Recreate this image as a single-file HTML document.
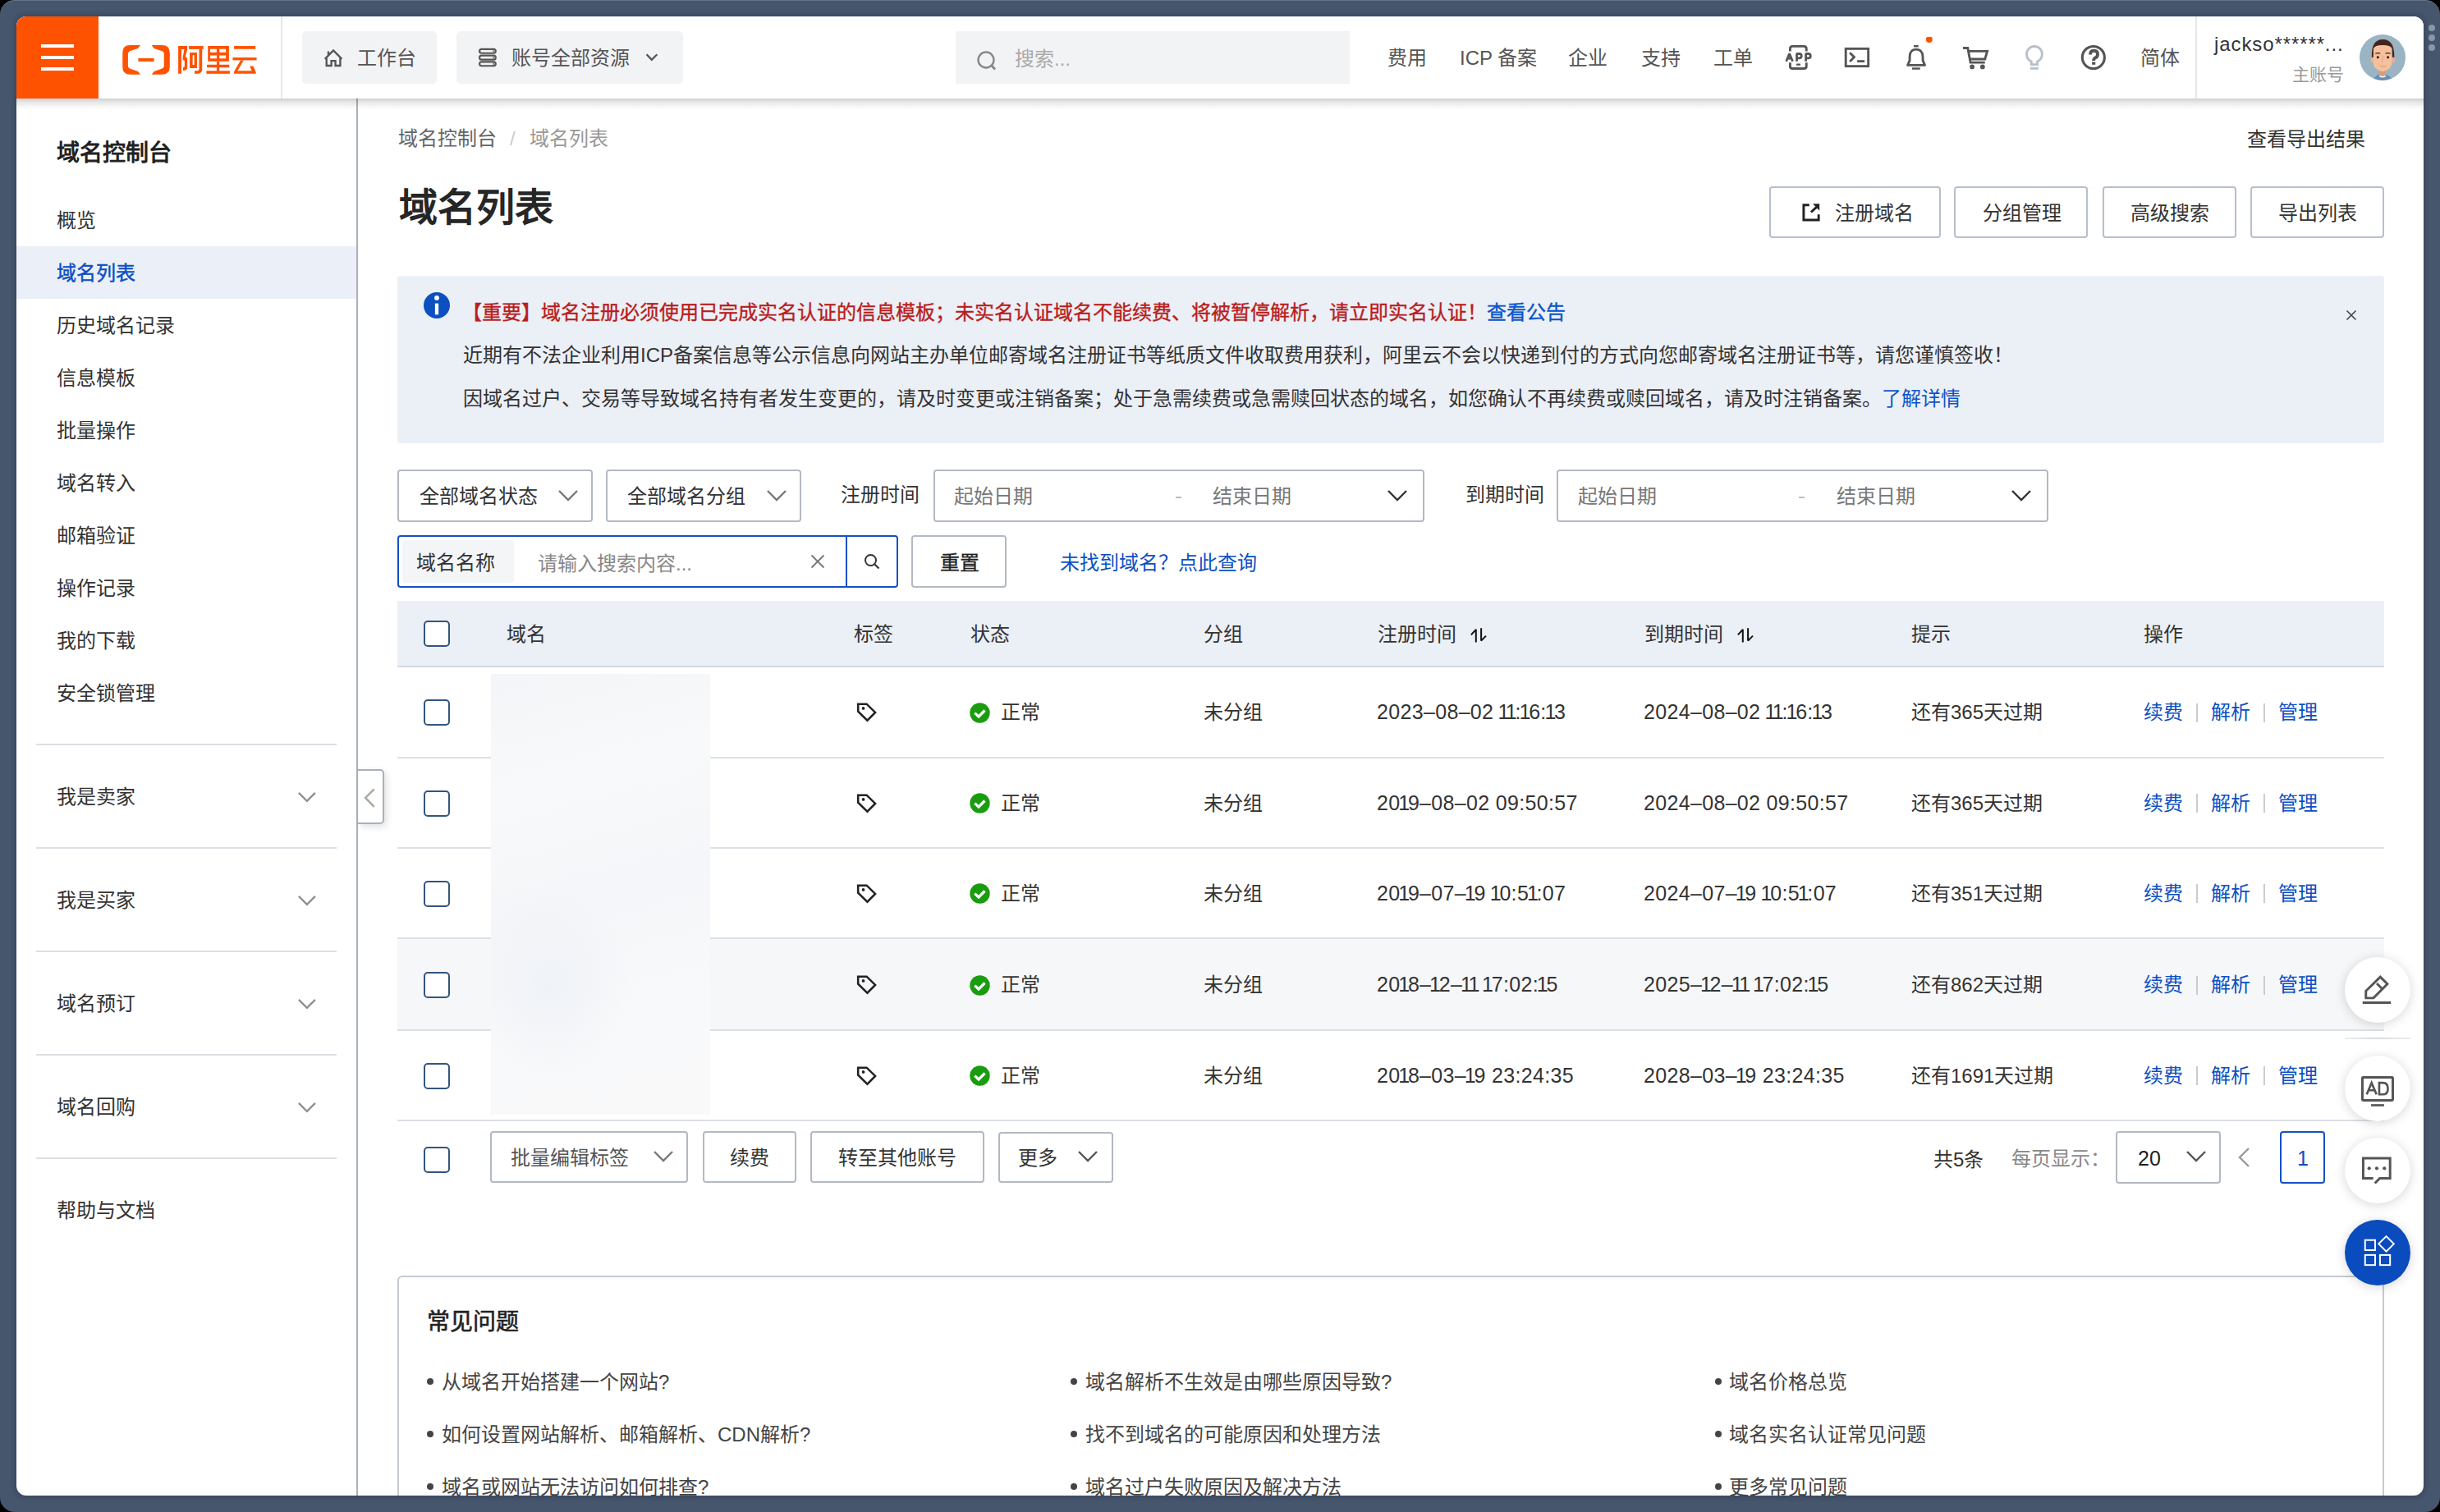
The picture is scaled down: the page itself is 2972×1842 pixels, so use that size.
<!DOCTYPE html>
<html lang="zh-CN"><head><meta charset="utf-8"><title>域名列表</title>
<style>
html,body{margin:0;padding:0;width:2972px;height:1842px;overflow:hidden;background:#000}
body{font-family:"Liberation Sans",sans-serif;position:relative}
.frame{position:absolute;left:0;top:0;width:2972px;height:1842px;background:#46566d;border-radius:18px;box-shadow:inset 0 1px 0 rgba(255,255,255,0.18)}
.win{position:absolute;left:20px;top:20px;width:2932px;height:1802px;background:#fff;border-radius:12px;overflow:hidden;box-shadow:0 0 7px 1px rgba(20,30,45,0.35)}
.page{position:absolute;left:-20px;top:-20px;width:2972px;height:1842px}
.a{position:absolute;box-sizing:content-box}
.t{position:absolute;white-space:nowrap}
.hdr{position:absolute;left:20px;top:20px;width:2932px;height:100px;background:#fff}
</style></head><body>
<div class="frame"></div>
<div style="position:absolute;left:2958px;top:30px;width:8px;height:8px;border-radius:50%;background:#8a97a8"></div>
<div style="position:absolute;left:2958px;top:42px;width:8px;height:8px;border-radius:50%;background:#8a97a8"></div>
<div style="position:absolute;left:2958px;top:54px;width:8px;height:8px;border-radius:50%;background:#8a97a8"></div>
<div class="win"><div class="page">
<div class="hdr"></div>
<div class="a" style="left:20px;top:20px;width:100px;height:100px;background:#ff5200"></div>
<div class="a" style="left:50px;top:54px;width:40px;height:4px;background:#fff"></div>
<div class="a" style="left:50px;top:68px;width:40px;height:4px;background:#fff"></div>
<div class="a" style="left:50px;top:82px;width:40px;height:4px;background:#fff"></div>
<svg class="a" style="left:140px;top:45px;" width="180" height="55" viewBox="0 0 2440 746">
<g fill="#ff5200">
<path d="M420 135 L250 135 Q125 135 125 260 L125 495 Q125 620 250 620 L420 620 L380 568 L255 525 Q215 512 215 470 L215 285 Q215 243 255 230 L380 190 Z"/>
<path d="M605 135 L775 135 Q905 135 905 260 L905 495 Q905 620 775 620 L605 620 L645 568 L770 525 Q810 512 810 470 L810 285 Q810 243 770 230 L645 190 Z"/>
<rect x="385" y="352" width="260" height="53"/>
<path d="M1045 150 L1195 150 L1195 205 L1165 330 L1195 350 L1195 505 Q1195 555 1125 557 L1125 505 Q1150 500 1150 480 L1150 395 L1120 375 L1120 340 L1145 205 L1098 205 L1098 608 L1045 608 Z"/>
<rect x="1220" y="150" width="240" height="52"/>
<path d="M1390 202 L1440 202 L1440 530 Q1440 608 1360 608 L1315 608 L1315 558 L1365 558 Q1390 558 1390 530 Z"/>
<path fill-rule="evenodd" d="M1235 258 L1355 258 L1355 515 L1235 515 Z M1283 302 L1283 462 L1310 462 L1310 302 Z"/>
<path fill-rule="evenodd" d="M1535 150 L1883 150 L1883 405 L1535 405 Z M1572 200 L1572 256 L1680 256 L1680 200 Z M1725 200 L1725 256 L1832 256 L1832 200 Z M1572 305 L1572 356 L1680 356 L1680 305 Z M1725 305 L1725 356 L1832 356 L1832 305 Z"/>
<rect x="1680" y="405" width="45" height="160"/>
<rect x="1520" y="458" width="367" height="47"/>
<rect x="1510" y="560" width="387" height="48"/>
<rect x="1967" y="150" width="353" height="50"/>
<rect x="1945" y="340" width="395" height="45"/>
<path d="M2075 385 L2125 385 L2025 560 L2258 560 L2228 482 L2285 482 L2330 590 Q2335 608 2310 608 L1967 608 L1967 572 Z"/>
</g></svg>
<div class="a" style="left:342px;top:20px;width:2px;height:100px;background:#e6e8eb"></div>
<div class="a" style="left:368px;top:38px;width:164px;height:64px;background:#f2f3f5;border-radius:5px"></div>
<svg class="a" style="left:380px;top:50px;" width="40" height="40" viewBox="0 0 406.7 406.7"><g fill="none" stroke="#555" stroke-width="24" stroke-linejoin="miter">
<path d="M160 222 L265 115 L370 222"/>
<path d="M180 210 L180 305 L240 305 L240 245 L290 245 L290 305 L350 305 L350 210"/>
<path d="M203 128 L203 170"/></g></svg>
<div class="t " style="left:435px;top:53.0px;font-size:24px;line-height:36px;color:#555;font-weight:400;">工作台</div>
<div class="a" style="left:556px;top:38px;width:276px;height:64px;background:#f2f3f5;border-radius:5px"></div>
<svg class="a" style="left:380px;top:50px;" width="240" height="40" viewBox="0 0 2440 406.7"><g fill="none" stroke="#555" stroke-width="22">
<rect x="2075" y="100" width="200" height="50" rx="25"/>
<rect x="2075" y="180" width="200" height="50" rx="25"/>
<rect x="2075" y="258" width="200" height="50" rx="25"/></g>
<g fill="#555"><rect x="2240" y="115" width="14" height="20"/><rect x="2240" y="195" width="14" height="20"/><rect x="2240" y="273" width="14" height="20"/></g></svg>
<div class="t " style="left:623px;top:53.0px;font-size:24px;line-height:36px;color:#555;font-weight:400;">账号全部资源</div>
<svg class="a" style="left:785px;top:60px;" width="20" height="20" viewBox="0 0 20 20"><path d="M2.6 6.2 L8.8 12.9 L15.4 6.2" fill="none" stroke="#555" stroke-width="2.3"/></svg>
<div class="a" style="left:1164px;top:38px;width:480px;height:64px;background:#f2f3f5"></div>
<svg class="a" style="left:1185px;top:58px;" width="32" height="32" viewBox="0 0 32 32"><circle cx="16" cy="15" r="9.5" fill="none" stroke="#888" stroke-width="2.4"/><path d="M22.5 21.5 L27 26.5" stroke="#888" stroke-width="2.8"/></svg>
<div class="t " style="left:1236px;top:54.0px;font-size:24px;line-height:36px;color:#aaa;font-weight:400;">搜索...</div>
<div class="t " style="left:1690px;top:53.0px;font-size:24px;line-height:36px;color:#555;font-weight:400;">费用</div>
<div class="t " style="left:1778px;top:53.0px;font-size:24px;line-height:36px;color:#555;font-weight:400;">ICP 备案</div>
<div class="t " style="left:1910px;top:53.0px;font-size:24px;line-height:36px;color:#555;font-weight:400;">企业</div>
<div class="t " style="left:1999px;top:53.0px;font-size:24px;line-height:36px;color:#555;font-weight:400;">支持</div>
<div class="t " style="left:2087px;top:53.0px;font-size:24px;line-height:36px;color:#555;font-weight:400;">工单</div>
<svg class="a" style="left:2165px;top:45px;" width="200" height="50" viewBox="0 0 2440 610"><g fill="none" stroke="#555" stroke-width="35">
<path d="M188 215 L188 175 Q188 138 225 138 L393 138 Q430 138 430 175 L430 215"/>
<path d="M188 380 L188 435 Q188 470 225 470 L393 470 Q430 470 430 435 L430 380"/>
<rect x="1015" y="175" width="335" height="260"/>
<path d="M1075 235 L1140 300 L1075 365"/>
<path d="M1185 362 L1295 362"/>
<path d="M2060 185 Q1965 185 1965 300 L1965 350 L1935 420 L2190 420 L2160 350 L2160 300 Q2160 185 2060 185 Z" stroke-linejoin="round"/>
</g>
<g fill="#555">
<rect x="280" y="395" width="62" height="28" rx="8"/>
<rect x="2025" y="122" width="70" height="30"/>
<rect x="2000" y="455" width="120" height="30"/>
</g>
<g fill="none" stroke="#555" stroke-width="34" stroke-linejoin="bevel"><path d="M130 362 L178 248 L226 362 M150 320 L206 320"/><path d="M287 362 L287 250 L322 250 Q357 250 357 283 Q357 316 322 316 L287 316"/><path d="M422 362 L422 250 L457 250 Q492 250 492 283 Q492 316 457 316 L422 316"/></g>
<circle cx="2255" cy="38" r="48" fill="#ff5200"/></svg>
<svg class="a" style="left:2380px;top:45px;" width="200" height="50" viewBox="0 0 2440 610"><g fill="none" stroke="#555" stroke-width="35">
<path d="M135 165 L205 165 L245 380 L460 380"/>
<path d="M215 212 L495 212 L460 330 L245 330"/>
<circle cx="2072" cy="305" r="165" stroke-width="38"/>
</g>
<g fill="#555"><circle cx="270" cy="445" r="35"/><circle cx="425" cy="445" r="35"/></g>
<g fill="none" stroke="#b8c0ca" stroke-width="35">
<path d="M1150 385 L1150 365 Q1080 330 1080 255 A115 115 0 1 1 1310 255 Q1310 330 1240 365 L1240 410 L1150 410 Z"/>
</g>
<rect x="1135" y="450" width="120" height="35" fill="#b8c0ca"/>
<path d="M2025 262 Q2025 205 2078 205 Q2135 205 2135 258 Q2135 292 2100 310 Q2075 325 2075 355" fill="none" stroke="#555" stroke-width="48"/><rect x="2050" y="372" width="52" height="40" fill="#555"/></svg>
<div class="t " style="left:2607px;top:53.0px;font-size:24px;line-height:36px;color:#555;font-weight:400;">简体</div>
<div class="a" style="left:2674px;top:20px;width:2px;height:100px;background:#e6e8eb"></div>
<div class="t " style="left:2697px;top:36.0px;font-size:24px;line-height:36px;color:#333;font-weight:400;letter-spacing:0.9px">jackso******...</div>
<div class="t " style="left:2792px;top:75.0px;font-size:21px;line-height:32px;color:#999;font-weight:400;">主账号</div>
<svg class="a" style="left:2874px;top:42px;" width="56" height="56" viewBox="0 0 56 56"><defs><clipPath id="avc"><circle cx="28" cy="28" r="28"/></clipPath></defs>
<circle cx="28" cy="28" r="28" fill="#9ab4c4"/>
<g clip-path="url(#avc)">
<path d="M17 57 Q18 48.5 28 48 Q38 48.5 40 57 Z" fill="#6690b4"/>
<path d="M24.2 42 L31.8 42 L31.8 50.5 Q28 52.5 24.2 50.5 Z" fill="#d99a7e"/>
<path d="M24.2 49.8 Q28 52 31.8 49.8 L31.8 51.5 Q28 53.5 24.2 51.5 Z" fill="#f4f4f4"/>
<ellipse cx="15.4" cy="30.8" rx="1.9" ry="3.3" fill="#eaad90"/><ellipse cx="41.6" cy="30.8" rx="1.9" ry="3.3" fill="#eaad90"/>
<path d="M16.6 20 Q16.6 12.5 28 12.5 Q39.6 12.5 39.6 20 L39.6 33 Q39.6 40 34 43 Q30.5 45 28 45 Q25.5 45 22 43 Q16.6 40 16.6 33 Z" fill="#f6c09c"/>
<path d="M14.9 28 Q14 6 28.3 6 Q42.8 6 42.3 28 L39.8 27.5 L39.6 17 Q37.5 12.8 28 13 Q19 12.8 17 17 L16.8 27.5 Z" fill="#46251f"/>
<path d="M19.3 23.2 Q22.3 21.9 25.3 23.2" stroke="#46251f" stroke-width="1.3" fill="none"/>
<path d="M31.6 23.2 Q34.6 21.9 37.6 23.2" stroke="#46251f" stroke-width="1.3" fill="none"/>
<circle cx="22.3" cy="27.7" r="1.5" fill="#2a1a16"/><circle cx="34.6" cy="27.7" r="1.5" fill="#2a1a16"/>
<path d="M28.4 26 L27.6 33.5" stroke="#e2a383" stroke-width="0.9" fill="none"/>
<path d="M24.9 38.4 Q28.5 39.4 32.3 38.4" stroke="#e5a185" stroke-width="1.4" fill="none" stroke-linecap="round"/>
</g></svg>
<div class="a" style="left:434px;top:120px;width:2px;height:1702px;background:#a9b1bc"></div>
<div class="t " style="left:69px;top:166.0px;font-size:28px;line-height:42px;color:#222;font-weight:700;">域名控制台</div>
<div class="a" style="left:20px;top:300px;width:414px;height:64px;background:#ebeff7"></div>
<div class="t " style="left:69px;top:251.0px;font-size:24px;line-height:36px;color:#333;font-weight:400;">概览</div>
<div class="t " style="left:69px;top:315.0px;font-size:24px;line-height:36px;color:#0c4fc4;font-weight:400;-webkit-text-stroke:0.45px #0c4fc4">域名列表</div>
<div class="t " style="left:69px;top:379.0px;font-size:24px;line-height:36px;color:#333;font-weight:400;">历史域名记录</div>
<div class="t " style="left:69px;top:443.0px;font-size:24px;line-height:36px;color:#333;font-weight:400;">信息模板</div>
<div class="t " style="left:69px;top:507.0px;font-size:24px;line-height:36px;color:#333;font-weight:400;">批量操作</div>
<div class="t " style="left:69px;top:571.0px;font-size:24px;line-height:36px;color:#333;font-weight:400;">域名转入</div>
<div class="t " style="left:69px;top:635.0px;font-size:24px;line-height:36px;color:#333;font-weight:400;">邮箱验证</div>
<div class="t " style="left:69px;top:699.0px;font-size:24px;line-height:36px;color:#333;font-weight:400;">操作记录</div>
<div class="t " style="left:69px;top:763.0px;font-size:24px;line-height:36px;color:#333;font-weight:400;">我的下载</div>
<div class="t " style="left:69px;top:827.0px;font-size:24px;line-height:36px;color:#333;font-weight:400;">安全锁管理</div>
<div class="a" style="left:44px;top:906px;width:366px;height:2px;background:#dcdfe4"></div>
<div class="a" style="left:44px;top:1032px;width:366px;height:2px;background:#dcdfe4"></div>
<div class="a" style="left:44px;top:1158px;width:366px;height:2px;background:#dcdfe4"></div>
<div class="a" style="left:44px;top:1284px;width:366px;height:2px;background:#dcdfe4"></div>
<div class="a" style="left:44px;top:1410px;width:366px;height:2px;background:#dcdfe4"></div>
<div class="t " style="left:69px;top:953.0px;font-size:24px;line-height:36px;color:#333;font-weight:400;">我是卖家</div>
<svg class="a" style="left:360px;top:958px;" width="28" height="24" viewBox="0 0 28 24"><path d="M3.9 7.9 L13.9 17.8 L23.9 7.9" fill="none" stroke="#8e8e8e" stroke-width="2.3"/></svg>
<div class="t " style="left:69px;top:1079.0px;font-size:24px;line-height:36px;color:#333;font-weight:400;">我是买家</div>
<svg class="a" style="left:360px;top:1084px;" width="28" height="24" viewBox="0 0 28 24"><path d="M3.9 7.9 L13.9 17.8 L23.9 7.9" fill="none" stroke="#8e8e8e" stroke-width="2.3"/></svg>
<div class="t " style="left:69px;top:1205.0px;font-size:24px;line-height:36px;color:#333;font-weight:400;">域名预订</div>
<svg class="a" style="left:360px;top:1210px;" width="28" height="24" viewBox="0 0 28 24"><path d="M3.9 7.9 L13.9 17.8 L23.9 7.9" fill="none" stroke="#8e8e8e" stroke-width="2.3"/></svg>
<div class="t " style="left:69px;top:1331.0px;font-size:24px;line-height:36px;color:#333;font-weight:400;">域名回购</div>
<svg class="a" style="left:360px;top:1336px;" width="28" height="24" viewBox="0 0 28 24"><path d="M3.9 7.9 L13.9 17.8 L23.9 7.9" fill="none" stroke="#8e8e8e" stroke-width="2.3"/></svg>
<div class="t " style="left:69px;top:1457.0px;font-size:24px;line-height:36px;color:#333;font-weight:400;">帮助与文档</div>
<div class="a" style="left:436px;top:937px;width:30px;height:63px;border:2px solid #a9b1bc;border-left:none;border-radius:0 5px 5px 0;background:#fff;box-shadow:3px 3px 8px rgba(0,0,0,0.12)"></div>
<svg class="a" style="left:440px;top:958px;" width="20" height="28" viewBox="0 0 20 28"><path d="M15.7 3.3 L5.1 13.9 L15.7 24.8" fill="none" stroke="#aaa" stroke-width="2.6"/></svg>
<div class="t " style="left:485px;top:151.0px;font-size:24px;line-height:36px;color:#666;font-weight:400;">域名控制台</div>
<div class="t " style="left:621px;top:151.0px;font-size:24px;line-height:36px;color:#ccc;font-weight:400;">/</div>
<div class="t " style="left:645px;top:151.0px;font-size:24px;line-height:36px;color:#999;font-weight:400;">域名列表</div>
<div class="t " style="left:486px;top:218.0px;font-size:47px;line-height:70px;color:#262626;font-weight:700;">域名列表</div>
<div class="t " style="left:2737px;top:152.0px;font-size:24px;line-height:36px;color:#333;font-weight:400;">查看导出结果</div>
<div class="a" style="left:2155px;top:227px;width:205px;height:59px;border:2px solid #b7bfcc;border-radius:4px"></div>
<div class="t " style="left:2235px;top:242.0px;font-size:24px;line-height:36px;color:#333;font-weight:400;">注册域名</div>
<div class="a" style="left:2380px;top:227px;width:159px;height:59px;border:2px solid #b7bfcc;border-radius:4px"></div>
<div class="t " style="left:2415px;top:242.0px;font-size:24px;line-height:36px;color:#333;font-weight:400;">分组管理</div>
<div class="a" style="left:2561px;top:227px;width:159px;height:59px;border:2px solid #b7bfcc;border-radius:4px"></div>
<div class="t " style="left:2595px;top:242.0px;font-size:24px;line-height:36px;color:#333;font-weight:400;">高级搜索</div>
<div class="a" style="left:2741px;top:227px;width:159px;height:59px;border:2px solid #b7bfcc;border-radius:4px"></div>
<div class="t " style="left:2775px;top:242.0px;font-size:24px;line-height:36px;color:#333;font-weight:400;">导出列表</div>
<svg class="a" style="left:2185px;top:240px;" width="50" height="40" viewBox="0 0 1890 1512"><g fill="none" stroke="#222" stroke-width="110"><path d="M710 370 L450 370 L450 1060 L1140 1060 L1140 800"/><path d="M790 700 L1060 450"/></g><path d="M870 310 L1180 310 L1180 630 Z" fill="#222"/></svg>
<div class="a" style="left:484px;top:336px;width:2420px;height:204px;background:#ebeff6;border-radius:4px"></div>
<svg class="a" style="left:516px;top:356px;" width="32" height="32" viewBox="0 0 32 32"><circle cx="16" cy="16" r="16" fill="#0b4fc0"/><circle cx="16" cy="6.9" r="2.9" fill="#fff"/><rect x="13.85" y="13.6" width="4.3" height="13.7" fill="#fff"/></svg>
<div class="t " style="left:563px;top:363.0px;font-size:24px;line-height:36px;color:#b91d1c;font-weight:400;-webkit-text-stroke:0.35px #b91d1c">【重要】域名注册必须使用已完成实名认证的信息模板；未实名认证域名不能续费、将被暂停解析，请立即实名认证！<span style="color:#0b55c9;-webkit-text-stroke:0.35px #0b55c9">查看公告</span></div>
<div class="t " style="left:564px;top:415.0px;font-size:24px;line-height:36px;color:#333;font-weight:400;">近期有不法企业利用ICP备案信息等公示信息向网站主办单位邮寄域名注册证书等纸质文件收取费用获利，阿里云不会以快递到付的方式向您邮寄域名注册证书等，请您谨慎签收！</div>
<div class="t " style="left:564px;top:468.0px;font-size:24px;line-height:36px;color:#333;font-weight:400;">因域名过户、交易等导致域名持有者发生变更的，请及时变更或注销备案；处于急需续费或急需赎回状态的域名，如您确认不再续费或赎回域名，请及时注销备案。<span style="color:#0b55c9">了解详情</span></div>
<svg class="a" style="left:2856px;top:376px;" width="16" height="16" viewBox="0 0 16 16"><path d="M2.5 2.5 L13.5 13.5 M13.5 2.5 L2.5 13.5" stroke="#444" stroke-width="1.6"/></svg>
<div class="a" style="left:484px;top:572px;width:234px;height:60px;border:2px solid #b3b9c2;border-radius:4px;background:#fff;"></div>
<div class="t " style="left:511px;top:587.0px;font-size:24px;line-height:36px;color:#333;font-weight:400;">全部域名状态</div>
<svg class="a" style="left:678.0px;top:594.5px;" width="28" height="17.0" viewBox="0 0 28 17.0"><path d="M3 3 L14.0 14.0 L25 3" fill="none" stroke="#777" stroke-width="2.4"/></svg>
<div class="a" style="left:738px;top:572px;width:234px;height:60px;border:2px solid #b3b9c2;border-radius:4px;background:#fff;"></div>
<div class="t " style="left:764px;top:587.0px;font-size:24px;line-height:36px;color:#333;font-weight:400;">全部域名分组</div>
<svg class="a" style="left:932.0px;top:594.5px;" width="28" height="17.0" viewBox="0 0 28 17.0"><path d="M3 3 L14.0 14.0 L25 3" fill="none" stroke="#777" stroke-width="2.4"/></svg>
<div class="t " style="left:1024px;top:585.0px;font-size:24px;line-height:36px;color:#333;font-weight:400;">注册时间</div>
<div class="a" style="left:1137px;top:572px;width:594px;height:60px;border:2px solid #b3b9c2;border-radius:4px;background:#fff;"></div>
<div class="t " style="left:1162px;top:587.0px;font-size:24px;line-height:36px;color:#777;font-weight:400;">起始日期</div>
<div class="a" style="left:1432px;top:605px;width:7px;height:2px;background:#bbb"></div>
<div class="t " style="left:1477px;top:587.0px;font-size:24px;line-height:36px;color:#777;font-weight:400;">结束日期</div>
<svg class="a" style="left:1688.0px;top:594.5px;" width="28" height="17.0" viewBox="0 0 28 17.0"><path d="M3 3 L14.0 14.0 L25 3" fill="none" stroke="#333" stroke-width="2.4"/></svg>
<div class="t " style="left:1785px;top:585.0px;font-size:24px;line-height:36px;color:#333;font-weight:400;">到期时间</div>
<div class="a" style="left:1896px;top:572px;width:595px;height:60px;border:2px solid #b3b9c2;border-radius:4px;background:#fff;"></div>
<div class="t " style="left:1922px;top:587.0px;font-size:24px;line-height:36px;color:#777;font-weight:400;">起始日期</div>
<div class="a" style="left:2191px;top:605px;width:7px;height:2px;background:#bbb"></div>
<div class="t " style="left:2237px;top:587.0px;font-size:24px;line-height:36px;color:#777;font-weight:400;">结束日期</div>
<svg class="a" style="left:2448.0px;top:594.5px;" width="28" height="17.0" viewBox="0 0 28 17.0"><path d="M3 3 L14.0 14.0 L25 3" fill="none" stroke="#333" stroke-width="2.4"/></svg>
<div class="a" style="left:484px;top:652px;width:606px;height:60px;border:2px solid #1450c8;border-radius:4px;background:#fff;"></div>
<div class="a" style="left:490px;top:658px;width:136px;height:52px;background:#f4f5f7;border-radius:3px"></div>
<div class="t " style="left:507px;top:668.0px;font-size:24px;line-height:36px;color:#333;font-weight:400;">域名名称</div>
<div class="t " style="left:655px;top:669.0px;font-size:24px;line-height:36px;color:#888;font-weight:400;">请输入搜索内容...</div>
<svg class="a" style="left:986px;top:674px;" width="20" height="20" viewBox="0 0 20 20"><path d="M2.5 2.5 L17.5 17.5 M17.5 2.5 L2.5 17.5" stroke="#777" stroke-width="1.8"/></svg>
<div class="a" style="left:1030px;top:652px;width:2px;height:64px;background:#1450c8"></div>
<svg class="a" style="left:1050px;top:672px;" width="24" height="24" viewBox="0 0 24 24"><circle cx="10.5" cy="10.5" r="6.5" fill="none" stroke="#333" stroke-width="2"/><path d="M15.5 15.5 L20.5 20.5" stroke="#333" stroke-width="2.2"/></svg>
<div class="a" style="left:1110px;top:652px;width:112px;height:60px;border:2px solid #b3b9c2;border-radius:4px;background:#fff;"></div>
<div class="t " style="left:1145px;top:668.0px;font-size:24px;line-height:36px;color:#222;font-weight:400;-webkit-text-stroke:0.3px #222">重置</div>
<div class="t " style="left:1291px;top:668.0px;font-size:24px;line-height:36px;color:#0c4fc4;font-weight:400;">未找到域名？点此查询</div>
<div class="a" style="left:484px;top:732px;width:2420px;height:80px;background:#ebeff6"></div>
<div class="a" style="left:484px;top:811px;width:2420px;height:2px;background:#d5d9df"></div>
<div class="a" style="left:516px;top:756px;width:28px;height:28px;border:2px solid #34557d;border-radius:5px;background:#fff"></div>
<div class="t " style="left:617px;top:755.0px;font-size:24px;line-height:36px;color:#333;font-weight:400;">域名</div>
<div class="t " style="left:1040px;top:755.0px;font-size:24px;line-height:36px;color:#333;font-weight:400;">标签</div>
<div class="t " style="left:1182px;top:755.0px;font-size:24px;line-height:36px;color:#333;font-weight:400;">状态</div>
<div class="t " style="left:1466px;top:755.0px;font-size:24px;line-height:36px;color:#333;font-weight:400;">分组</div>
<div class="t " style="left:1678px;top:755.0px;font-size:24px;line-height:36px;color:#333;font-weight:400;">注册时间</div>
<div class="t " style="left:2003px;top:755.0px;font-size:24px;line-height:36px;color:#333;font-weight:400;">到期时间</div>
<div class="t " style="left:2328px;top:755.0px;font-size:24px;line-height:36px;color:#333;font-weight:400;">提示</div>
<div class="t " style="left:2611px;top:755.0px;font-size:24px;line-height:36px;color:#333;font-weight:400;">操作</div>
<svg class="a" style="left:1786px;top:755px;" width="32" height="32" viewBox="0 0 32 32"><path d="M5.9 18.3 L11.8 11.8 L11.8 27.4 M18.1 10.3 L18.1 25.6 L24 19.6" fill="none" stroke="#111" stroke-width="2" stroke-linejoin="bevel"/></svg>
<svg class="a" style="left:2111px;top:755px;" width="32" height="32" viewBox="0 0 32 32"><path d="M5.9 18.3 L11.8 11.8 L11.8 27.4 M18.1 10.3 L18.1 25.6 L24 19.6" fill="none" stroke="#111" stroke-width="2" stroke-linejoin="bevel"/></svg>
<div class="a" style="left:484px;top:922px;width:2420px;height:2px;background:#dcdfe4"></div>
<div class="a" style="left:516px;top:852px;width:28px;height:28px;border:2px solid #34557d;border-radius:5px;background:#fff"></div>
<svg class="a" style="left:1030px;top:845px;" width="40" height="40" viewBox="0 0 390.4 390.4"><path d="M148 124 L250 124 L352 224 L258 318 L148 212 Z" fill="none" stroke="#222" stroke-width="25" stroke-linejoin="miter"/><circle cx="210" cy="175" r="18" fill="#222"/></svg>
<svg class="a" style="left:1181px;top:856px;" width="25" height="25" viewBox="0 0 25 25"><circle cx="12.5" cy="12.5" r="12.2" fill="#1a9c0f"/><path d="M6.3 12.6 L11 17 L18.5 9.5" fill="none" stroke="#fff" stroke-width="3.2"/></svg>
<div class="t " style="left:1219px;top:849.5px;font-size:24px;line-height:36px;color:#333;font-weight:400;">正常</div>
<div class="t " style="left:1466px;top:849.5px;font-size:24px;line-height:36px;color:#333;font-weight:400;">未分组</div>
<div class="t " style="left:1677px;top:847.5px;font-size:25px;line-height:38px;color:#333;font-weight:400;letter-spacing:0.33px">2023–08–02 <span style="margin-left:-2.25px;letter-spacing:-2.25px">1</span><span style="margin-left:-2.25px;letter-spacing:-2.25px">1</span>:<span style="margin-left:-2.25px;letter-spacing:-2.25px">1</span>6:<span style="margin-left:-2.25px;letter-spacing:-2.25px">1</span>3</div>
<div class="t " style="left:2002px;top:847.5px;font-size:25px;line-height:38px;color:#333;font-weight:400;letter-spacing:0.33px">2024–08–02 <span style="margin-left:-2.25px;letter-spacing:-2.25px">1</span><span style="margin-left:-2.25px;letter-spacing:-2.25px">1</span>:<span style="margin-left:-2.25px;letter-spacing:-2.25px">1</span>6:<span style="margin-left:-2.25px;letter-spacing:-2.25px">1</span>3</div>
<div class="t " style="left:2328px;top:849.5px;font-size:24px;line-height:36px;color:#333;font-weight:400;">还有365天过期</div>
<div class="t " style="left:2611px;top:849.5px;font-size:24px;line-height:36px;color:#0c4fc4;font-weight:400;">续费</div>
<div class="a" style="left:2675px;top:857px;width:2px;height:23px;background:#ccc"></div>
<div class="t " style="left:2693px;top:849.5px;font-size:24px;line-height:36px;color:#0c4fc4;font-weight:400;">解析</div>
<div class="a" style="left:2757px;top:857px;width:2px;height:23px;background:#ccc"></div>
<div class="t " style="left:2775px;top:849.5px;font-size:24px;line-height:36px;color:#0c4fc4;font-weight:400;">管理</div>
<div class="a" style="left:484px;top:1032px;width:2420px;height:2px;background:#dcdfe4"></div>
<div class="a" style="left:516px;top:963px;width:28px;height:28px;border:2px solid #34557d;border-radius:5px;background:#fff"></div>
<svg class="a" style="left:1030px;top:956px;" width="40" height="40" viewBox="0 0 390.4 390.4"><path d="M148 124 L250 124 L352 224 L258 318 L148 212 Z" fill="none" stroke="#222" stroke-width="25" stroke-linejoin="miter"/><circle cx="210" cy="175" r="18" fill="#222"/></svg>
<svg class="a" style="left:1181px;top:966px;" width="25" height="25" viewBox="0 0 25 25"><circle cx="12.5" cy="12.5" r="12.2" fill="#1a9c0f"/><path d="M6.3 12.6 L11 17 L18.5 9.5" fill="none" stroke="#fff" stroke-width="3.2"/></svg>
<div class="t " style="left:1219px;top:960.5px;font-size:24px;line-height:36px;color:#333;font-weight:400;">正常</div>
<div class="t " style="left:1466px;top:960.5px;font-size:24px;line-height:36px;color:#333;font-weight:400;">未分组</div>
<div class="t " style="left:1677px;top:958.5px;font-size:25px;line-height:38px;color:#333;font-weight:400;letter-spacing:0.33px">20<span style="margin-left:-2.25px;letter-spacing:-2.25px">1</span>9–08–02 09:50:57</div>
<div class="t " style="left:2002px;top:958.5px;font-size:25px;line-height:38px;color:#333;font-weight:400;letter-spacing:0.33px">2024–08–02 09:50:57</div>
<div class="t " style="left:2328px;top:960.5px;font-size:24px;line-height:36px;color:#333;font-weight:400;">还有365天过期</div>
<div class="t " style="left:2611px;top:960.5px;font-size:24px;line-height:36px;color:#0c4fc4;font-weight:400;">续费</div>
<div class="a" style="left:2675px;top:967px;width:2px;height:23px;background:#ccc"></div>
<div class="t " style="left:2693px;top:960.5px;font-size:24px;line-height:36px;color:#0c4fc4;font-weight:400;">解析</div>
<div class="a" style="left:2757px;top:967px;width:2px;height:23px;background:#ccc"></div>
<div class="t " style="left:2775px;top:960.5px;font-size:24px;line-height:36px;color:#0c4fc4;font-weight:400;">管理</div>
<div class="a" style="left:484px;top:1142px;width:2420px;height:2px;background:#dcdfe4"></div>
<div class="a" style="left:516px;top:1073px;width:28px;height:28px;border:2px solid #34557d;border-radius:5px;background:#fff"></div>
<svg class="a" style="left:1030px;top:1066px;" width="40" height="40" viewBox="0 0 390.4 390.4"><path d="M148 124 L250 124 L352 224 L258 318 L148 212 Z" fill="none" stroke="#222" stroke-width="25" stroke-linejoin="miter"/><circle cx="210" cy="175" r="18" fill="#222"/></svg>
<svg class="a" style="left:1181px;top:1076px;" width="25" height="25" viewBox="0 0 25 25"><circle cx="12.5" cy="12.5" r="12.2" fill="#1a9c0f"/><path d="M6.3 12.6 L11 17 L18.5 9.5" fill="none" stroke="#fff" stroke-width="3.2"/></svg>
<div class="t " style="left:1219px;top:1070.5px;font-size:24px;line-height:36px;color:#333;font-weight:400;">正常</div>
<div class="t " style="left:1466px;top:1070.5px;font-size:24px;line-height:36px;color:#333;font-weight:400;">未分组</div>
<div class="t " style="left:1677px;top:1068.5px;font-size:25px;line-height:38px;color:#333;font-weight:400;letter-spacing:0.33px">20<span style="margin-left:-2.25px;letter-spacing:-2.25px">1</span>9–07–<span style="margin-left:-2.25px;letter-spacing:-2.25px">1</span>9 <span style="margin-left:-2.25px;letter-spacing:-2.25px">1</span>0:5<span style="margin-left:-2.25px;letter-spacing:-2.25px">1</span>:07</div>
<div class="t " style="left:2002px;top:1068.5px;font-size:25px;line-height:38px;color:#333;font-weight:400;letter-spacing:0.33px">2024–07–<span style="margin-left:-2.25px;letter-spacing:-2.25px">1</span>9 <span style="margin-left:-2.25px;letter-spacing:-2.25px">1</span>0:5<span style="margin-left:-2.25px;letter-spacing:-2.25px">1</span>:07</div>
<div class="t " style="left:2328px;top:1070.5px;font-size:24px;line-height:36px;color:#333;font-weight:400;">还有351天过期</div>
<div class="t " style="left:2611px;top:1070.5px;font-size:24px;line-height:36px;color:#0c4fc4;font-weight:400;">续费</div>
<div class="a" style="left:2675px;top:1077px;width:2px;height:23px;background:#ccc"></div>
<div class="t " style="left:2693px;top:1070.5px;font-size:24px;line-height:36px;color:#0c4fc4;font-weight:400;">解析</div>
<div class="a" style="left:2757px;top:1077px;width:2px;height:23px;background:#ccc"></div>
<div class="t " style="left:2775px;top:1070.5px;font-size:24px;line-height:36px;color:#0c4fc4;font-weight:400;">管理</div>
<div class="a" style="left:484px;top:1144px;width:2420px;height:110px;background:#f6f7f9"></div>
<div class="a" style="left:484px;top:1254px;width:2420px;height:2px;background:#dcdfe4"></div>
<div class="a" style="left:516px;top:1184px;width:28px;height:28px;border:2px solid #34557d;border-radius:5px;background:#fff"></div>
<svg class="a" style="left:1030px;top:1177px;" width="40" height="40" viewBox="0 0 390.4 390.4"><path d="M148 124 L250 124 L352 224 L258 318 L148 212 Z" fill="none" stroke="#222" stroke-width="25" stroke-linejoin="miter"/><circle cx="210" cy="175" r="18" fill="#222"/></svg>
<svg class="a" style="left:1181px;top:1188px;" width="25" height="25" viewBox="0 0 25 25"><circle cx="12.5" cy="12.5" r="12.2" fill="#1a9c0f"/><path d="M6.3 12.6 L11 17 L18.5 9.5" fill="none" stroke="#fff" stroke-width="3.2"/></svg>
<div class="t " style="left:1219px;top:1181.5px;font-size:24px;line-height:36px;color:#333;font-weight:400;">正常</div>
<div class="t " style="left:1466px;top:1181.5px;font-size:24px;line-height:36px;color:#333;font-weight:400;">未分组</div>
<div class="t " style="left:1677px;top:1179.5px;font-size:25px;line-height:38px;color:#333;font-weight:400;letter-spacing:0.33px">20<span style="margin-left:-2.25px;letter-spacing:-2.25px">1</span>8–<span style="margin-left:-2.25px;letter-spacing:-2.25px">1</span>2–<span style="margin-left:-2.25px;letter-spacing:-2.25px">1</span><span style="margin-left:-2.25px;letter-spacing:-2.25px">1</span> <span style="margin-left:-2.25px;letter-spacing:-2.25px">1</span>7:02:<span style="margin-left:-2.25px;letter-spacing:-2.25px">1</span>5</div>
<div class="t " style="left:2002px;top:1179.5px;font-size:25px;line-height:38px;color:#333;font-weight:400;letter-spacing:0.33px">2025–<span style="margin-left:-2.25px;letter-spacing:-2.25px">1</span>2–<span style="margin-left:-2.25px;letter-spacing:-2.25px">1</span><span style="margin-left:-2.25px;letter-spacing:-2.25px">1</span> <span style="margin-left:-2.25px;letter-spacing:-2.25px">1</span>7:02:<span style="margin-left:-2.25px;letter-spacing:-2.25px">1</span>5</div>
<div class="t " style="left:2328px;top:1181.5px;font-size:24px;line-height:36px;color:#333;font-weight:400;">还有862天过期</div>
<div class="t " style="left:2611px;top:1181.5px;font-size:24px;line-height:36px;color:#0c4fc4;font-weight:400;">续费</div>
<div class="a" style="left:2675px;top:1189px;width:2px;height:23px;background:#ccc"></div>
<div class="t " style="left:2693px;top:1181.5px;font-size:24px;line-height:36px;color:#0c4fc4;font-weight:400;">解析</div>
<div class="a" style="left:2757px;top:1189px;width:2px;height:23px;background:#ccc"></div>
<div class="t " style="left:2775px;top:1181.5px;font-size:24px;line-height:36px;color:#0c4fc4;font-weight:400;">管理</div>
<div class="a" style="left:484px;top:1364px;width:2420px;height:2px;background:#dcdfe4"></div>
<div class="a" style="left:516px;top:1295px;width:28px;height:28px;border:2px solid #34557d;border-radius:5px;background:#fff"></div>
<svg class="a" style="left:1030px;top:1288px;" width="40" height="40" viewBox="0 0 390.4 390.4"><path d="M148 124 L250 124 L352 224 L258 318 L148 212 Z" fill="none" stroke="#222" stroke-width="25" stroke-linejoin="miter"/><circle cx="210" cy="175" r="18" fill="#222"/></svg>
<svg class="a" style="left:1181px;top:1298px;" width="25" height="25" viewBox="0 0 25 25"><circle cx="12.5" cy="12.5" r="12.2" fill="#1a9c0f"/><path d="M6.3 12.6 L11 17 L18.5 9.5" fill="none" stroke="#fff" stroke-width="3.2"/></svg>
<div class="t " style="left:1219px;top:1292.5px;font-size:24px;line-height:36px;color:#333;font-weight:400;">正常</div>
<div class="t " style="left:1466px;top:1292.5px;font-size:24px;line-height:36px;color:#333;font-weight:400;">未分组</div>
<div class="t " style="left:1677px;top:1290.5px;font-size:25px;line-height:38px;color:#333;font-weight:400;letter-spacing:0.33px">20<span style="margin-left:-2.25px;letter-spacing:-2.25px">1</span>8–03–<span style="margin-left:-2.25px;letter-spacing:-2.25px">1</span>9 23:24:35</div>
<div class="t " style="left:2002px;top:1290.5px;font-size:25px;line-height:38px;color:#333;font-weight:400;letter-spacing:0.33px">2028–03–<span style="margin-left:-2.25px;letter-spacing:-2.25px">1</span>9 23:24:35</div>
<div class="t " style="left:2328px;top:1292.5px;font-size:24px;line-height:36px;color:#333;font-weight:400;">还有1691天过期</div>
<div class="t " style="left:2611px;top:1292.5px;font-size:24px;line-height:36px;color:#0c4fc4;font-weight:400;">续费</div>
<div class="a" style="left:2675px;top:1299px;width:2px;height:23px;background:#ccc"></div>
<div class="t " style="left:2693px;top:1292.5px;font-size:24px;line-height:36px;color:#0c4fc4;font-weight:400;">解析</div>
<div class="a" style="left:2757px;top:1299px;width:2px;height:23px;background:#ccc"></div>
<div class="t " style="left:2775px;top:1292.5px;font-size:24px;line-height:36px;color:#0c4fc4;font-weight:400;">管理</div>
<div class="a" style="left:598px;top:821px;width:267px;height:537px;background:radial-gradient(ellipse 100px 120px at 670px 1200px,rgba(232,237,246,0.55),rgba(232,237,246,0) 100%) fixed,linear-gradient(165deg,#f3f5f8 0%,#f8f9fa 25%,#f5f6f9 50%,#f8f9fa 75%,#f9f9fa 100%)"></div>
<div class="a" style="left:516px;top:1397px;width:28px;height:28px;border:2px solid #34557d;border-radius:5px;background:#fff"></div>
<div class="a" style="left:597px;top:1378px;width:237px;height:59px;border:2px solid #b3b9c2;border-radius:4px;background:#fff;"></div>
<div class="t " style="left:622px;top:1393.0px;font-size:24px;line-height:36px;color:#555;font-weight:400;">批量编辑标签</div>
<svg class="a" style="left:794.0px;top:1399.5px;" width="28" height="17.0" viewBox="0 0 28 17.0"><path d="M3 3 L14.0 14.0 L25 3" fill="none" stroke="#777" stroke-width="2.4"/></svg>
<div class="a" style="left:856px;top:1378px;width:110px;height:59px;border:2px solid #b3b9c2;border-radius:4px;background:#fff;"></div>
<div class="t " style="left:889px;top:1393.0px;font-size:24px;line-height:36px;color:#333;font-weight:400;">续费</div>
<div class="a" style="left:987px;top:1378px;width:208px;height:59px;border:2px solid #b3b9c2;border-radius:4px;background:#fff;"></div>
<div class="t " style="left:1021px;top:1393.0px;font-size:24px;line-height:36px;color:#333;font-weight:400;">转至其他账号</div>
<div class="a" style="left:1216px;top:1379px;width:136px;height:58px;border:2px solid #b3b9c2;border-radius:4px;background:#fff;"></div>
<div class="t " style="left:1240px;top:1393.0px;font-size:24px;line-height:36px;color:#333;font-weight:400;">更多</div>
<svg class="a" style="left:1311.0px;top:1399.5px;" width="28" height="17.0" viewBox="0 0 28 17.0"><path d="M3 3 L14.0 14.0 L25 3" fill="none" stroke="#555" stroke-width="2.4"/></svg>
<div class="t " style="left:2355px;top:1395.0px;font-size:24px;line-height:36px;color:#333;font-weight:400;">共5条</div>
<div class="t " style="left:2450px;top:1394.0px;font-size:24px;line-height:36px;color:#888;font-weight:400;">每页显示：</div>
<div class="a" style="left:2577px;top:1378px;width:124px;height:60px;border:2px solid #b3b9c2;border-radius:4px;background:#fff;"></div>
<div class="t " style="left:2604px;top:1392.0px;font-size:25px;line-height:38px;color:#222;font-weight:400;">20</div>
<svg class="a" style="left:2661.0px;top:1399.5px;" width="28" height="17.0" viewBox="0 0 28 17.0"><path d="M3 3 L14.0 14.0 L25 3" fill="none" stroke="#555" stroke-width="2.4"/></svg>
<svg class="a" style="left:2720px;top:1395px;" width="26" height="30" viewBox="0 0 26 30"><path d="M19 4 L8 15 L19 26" fill="none" stroke="#999" stroke-width="2.4"/></svg>
<div class="a" style="left:2777px;top:1378px;width:51px;height:60px;border:2px solid #1450c8;border-radius:4px;background:#fff;"></div>
<div class="t " style="left:2798px;top:1392.0px;font-size:25px;line-height:38px;color:#0c4fc4;font-weight:400;">1</div>
<div class="a" style="left:484px;top:1554px;width:2416px;height:400px;border:2px solid #c5cad2;border-radius:6px"></div>
<div class="t " style="left:520px;top:1590.0px;font-size:28px;line-height:42px;color:#222;font-weight:400;-webkit-text-stroke:0.6px #222">常见问题</div>
<div class="a" style="left:520px;top:1679px;width:8px;height:8px;background:#444;border-radius:50%"></div>
<div class="t " style="left:538px;top:1666.0px;font-size:24px;line-height:36px;color:#444;font-weight:400;">从域名开始搭建一个网站?</div>
<div class="a" style="left:520px;top:1743px;width:8px;height:8px;background:#444;border-radius:50%"></div>
<div class="t " style="left:538px;top:1730.0px;font-size:24px;line-height:36px;color:#444;font-weight:400;">如何设置网站解析、邮箱解析、CDN解析?</div>
<div class="a" style="left:520px;top:1807px;width:8px;height:8px;background:#444;border-radius:50%"></div>
<div class="t " style="left:538px;top:1794.0px;font-size:24px;line-height:36px;color:#444;font-weight:400;">域名或网站无法访问如何排查?</div>
<div class="a" style="left:1304px;top:1679px;width:8px;height:8px;background:#444;border-radius:50%"></div>
<div class="t " style="left:1322px;top:1666.0px;font-size:24px;line-height:36px;color:#444;font-weight:400;">域名解析不生效是由哪些原因导致?</div>
<div class="a" style="left:1304px;top:1743px;width:8px;height:8px;background:#444;border-radius:50%"></div>
<div class="t " style="left:1322px;top:1730.0px;font-size:24px;line-height:36px;color:#444;font-weight:400;">找不到域名的可能原因和处理方法</div>
<div class="a" style="left:1304px;top:1807px;width:8px;height:8px;background:#444;border-radius:50%"></div>
<div class="t " style="left:1322px;top:1794.0px;font-size:24px;line-height:36px;color:#444;font-weight:400;">域名过户失败原因及解决方法</div>
<div class="a" style="left:2089px;top:1679px;width:8px;height:8px;background:#444;border-radius:50%"></div>
<div class="t " style="left:2106px;top:1666.0px;font-size:24px;line-height:36px;color:#444;font-weight:400;">域名价格总览</div>
<div class="a" style="left:2089px;top:1743px;width:8px;height:8px;background:#444;border-radius:50%"></div>
<div class="t " style="left:2106px;top:1730.0px;font-size:24px;line-height:36px;color:#444;font-weight:400;">域名实名认证常见问题</div>
<div class="a" style="left:2089px;top:1807px;width:8px;height:8px;background:#444;border-radius:50%"></div>
<div class="t " style="left:2106px;top:1794.0px;font-size:24px;line-height:36px;color:#444;font-weight:400;">更多常见问题</div>
<div class="a" style="left:2856px;top:1166px;width:80px;height:80px;border-radius:50%;background:#fff;box-shadow:0 2px 14px rgba(0,0,0,0.16)"></div>
<svg class="a" style="left:2850px;top:1160px;" width="100" height="100" viewBox="0 0 1512 1512"><g fill="none" stroke="#555" stroke-width="45"><path d="M745 455 L875 585 L620 845 L480 845 L480 715 Z"/><path d="M680 575 L770 665"/></g><path d="M420 930 L940 930" stroke="#555" stroke-width="45"/></svg>
<div class="a" style="left:2856px;top:1264px;width:80px;height:2px;background:linear-gradient(90deg,#eee,#d8dadd,#eee)"></div>
<div class="a" style="left:2856px;top:1286px;width:80px;height:80px;border-radius:50%;background:#fff;box-shadow:0 2px 14px rgba(0,0,0,0.16)"></div>
<svg class="a" style="left:2850px;top:1280px;" width="100" height="100" viewBox="0 0 1512 1512"><rect x="415" y="490" width="560" height="425" rx="15" fill="none" stroke="#555" stroke-width="45"/><g fill="none" stroke="#555" stroke-width="40"><path d="M495 805 L585 592 L675 805 M528 730 L642 730"/><path d="M725 805 L725 592 L790 592 Q885 592 885 698 Q885 805 790 805 Z"/></g><path d="M575 1005 L815 1005" stroke="#555" stroke-width="40"/></svg>
<div class="a" style="left:2856px;top:1386px;width:80px;height:80px;border-radius:50%;background:#fff;box-shadow:0 2px 14px rgba(0,0,0,0.16)"></div>
<svg class="a" style="left:2850px;top:1376px;" width="100" height="100" viewBox="0 0 1512 1512"><g fill="none" stroke="#555" stroke-width="45"><path d="M615 900 L430 900 L430 530 L925 530 L925 900 L735 900 L645 990"/></g><g fill="#555"><circle cx="540" cy="715" r="32"/><circle cx="680" cy="715" r="32"/><circle cx="820" cy="715" r="32"/></g></svg>
<div class="a" style="left:2856px;top:1486px;width:80px;height:80px;border-radius:50%;background:#0a4cbd;box-shadow:0 2px 14px rgba(0,0,0,0.16)"></div>
<svg class="a" style="left:2850px;top:1476px;" width="100" height="100" viewBox="0 0 1512 1512"><g fill="none" stroke="#fff" stroke-width="30"><rect x="465" y="525" width="185" height="185"/><path d="M855 455 L995 595 L855 735 L715 595 Z"/><rect x="465" y="800" width="185" height="185"/><rect x="740" y="800" width="185" height="185"/></g></svg>
<div style="position:absolute;left:20px;top:120px;width:2932px;height:14px;background:linear-gradient(rgba(0,0,0,0.19),rgba(0,0,0,0.09) 35%,rgba(0,0,0,0.03) 70%,rgba(0,0,0,0))"></div>
</div></div>
</body></html>
